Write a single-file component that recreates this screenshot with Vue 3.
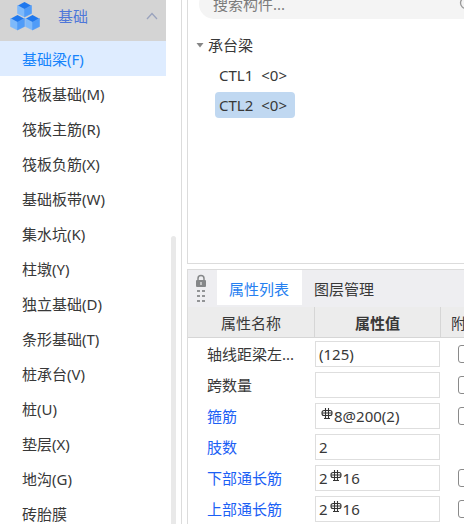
<script setup>
import { ref } from 'vue'

const members = [
  '基础梁(F)', '筏板基础(M)', '筏板主筋(R)', '筏板负筋(X)', '基础板带(W)',
  '集水坑(K)', '柱墩(Y)', '独立基础(D)', '条形基础(T)', '桩承台(V)',
  '桩(U)', '垫层(X)', '地沟(G)', '砖胎膜'
]
const activeMember = ref('基础梁(F)')

const beams = ['CTL1', 'CTL2']
const activeBeam = ref('CTL2')

const keyword = ref('')
const tabs = ['属性列表', '图层管理']
const activeTab = ref('属性列表')

const properties = ref([
  { name: '轴线距梁左...', value: '(125)', extra: false },
  { name: '跨数量', value: '', extra: false },
  { name: '箍筋', value: '8@200(2)', rebar: true, linked: true, extra: false },
  { name: '肢数', value: '2', linked: true },
  { name: '下部通长筋', count: '2', value: '16', rebar: true, linked: true, extra: false },
  { name: '上部通长筋', count: '2', value: '16', rebar: true, linked: true, extra: false }
])
</script>

<template>
  <div class="workspace">
    <aside class="sidebar">
      <nav class="menu">
        <button class="group" type="button">
          <svg class="cubes" viewBox="0 0 30 29" aria-hidden="true">
            <g v-for="p in [[7, 0], [0, 13], [15, 13]]" :key="p[0]" :transform="`translate(${p[0]} ${p[1]})`">
              <path d="M.5 3.500 7.500 7V15L.5 11.500Z" fill="#7db9fb" stroke="#7db9fb" stroke-width=".6" />
              <path d="M14.500 3.500 7.500 7V15L14.500 11.500Z" fill="#509cf8" stroke="#509cf8" stroke-width=".6" />
              <path d="M7.500 0 14 3.500 7.500 7 1 3.500Z" fill="#1f78ee" />
            </g>
          </svg>
          <span class="group-name">基础</span>
          <svg class="chevron" viewBox="0 0 12 8" aria-hidden="true">
            <path d="M1 7 6 1.500 11 7" fill="none" stroke="#9aa3bd" stroke-width="1.300" />
          </svg>
        </button>
        <button
          v-for="m in members"
          :key="m"
          type="button"
          class="member"
          :class="{ active: m === activeMember }"
          @click="activeMember = m"
        >{{ m }}</button>
      </nav>
      <div class="scroll-thumb"></div>
    </aside>

    <main class="content">
      <section class="list-panel">
        <div class="search-row">
          <label class="search">
            <input v-model="keyword" type="text" placeholder="搜索构件..." aria-label="搜索构件" />
            <svg class="magnifier" viewBox="0 0 16 16" aria-hidden="true">
              <circle cx="7" cy="7" r="5.500" fill="none" stroke="#999" stroke-width="1.300" />
              <path d="m11 11 4 4" stroke="#999" stroke-width="1.300" />
            </svg>
          </label>
        </div>
        <div class="tree">
          <button type="button" class="branch">
            <svg class="caret" viewBox="0 0 8 6" aria-hidden="true"><path d="M.5 1h7L4 5.500Z" fill="#858585" /></svg>
            <span>承台梁</span>
          </button>
          <button
            v-for="b in beams"
            :key="b"
            type="button"
            class="leaf"
            :class="{ active: b === activeBeam }"
            @click="activeBeam = b"
          ><span>{{ b }}</span><span>&lt;0&gt;</span></button>
        </div>
      </section>

      <section class="property-panel">
        <div class="tabs">
          <svg class="grip" viewBox="0 0 12 29" aria-hidden="true">
            <path d="M3 7V4.500a3 3 0 0 1 6 0V7" fill="none" stroke="#858789" stroke-width="1.500" />
            <rect x="1" y="6" width="10" height="7" rx="1" fill="#858789" />
            <path d="M6 8v3" stroke="#d8d8da" stroke-width="1.500" />
            <path d="M2 16h3v2H2zM7 16h3v2H7zM2 21h3v2H2zM7 21h3v2H7zM2 26h3v2H2zM7 26h3v2H7z" fill="#929496" />
          </svg>
          <button
            v-for="t in tabs"
            :key="t"
            type="button"
            class="tab"
            :class="{ active: t === activeTab }"
            @click="activeTab = t"
          >{{ t }}</button>
        </div>
        <table class="properties">
          <colgroup><col class="col-name" /><col class="col-value" /><col /></colgroup>
          <thead>
            <tr><th>属性名称</th><th class="strong">属性值</th><th class="extra-head">附</th></tr>
          </thead>
          <tbody>
            <tr v-for="(p, i) in properties" :key="p.name">
              <td class="name" :class="{ linked: p.linked }"><label :for="`prop-${i}`">{{ p.name }}</label></td>
              <td class="value">
                <div class="field">
                  <span v-if="p.count">{{ p.count }}</span>
                  <svg v-if="p.rebar" class="rebar" viewBox="0 0 12 12" aria-hidden="true">
                    <path d="M4.500 2.500H3A2 2 0 0 0 1 4.500V5.500A2 2 0 0 0 3 7.500H9A2 2 0 0 0 11 5.500V4.500A2 2 0 0 0 9 2.500H4.500M1 5H11M4.500 0V10.500M7.500 0V10.500M3 10.500H9" fill="none" stroke="#333" stroke-width="1.100" />
                  </svg>
                  <input :id="`prop-${i}`" v-model="p.value" type="text" />
                </div>
              </td>
              <td class="extra">
                <input v-if="p.extra !== undefined" v-model="p.extra" type="checkbox" :aria-label="p.name" />
              </td>
            </tr>
          </tbody>
        </table>
      </section>
    </main>
  </div>
</template>

<style>
body {
  margin: 0;
  background: #fff;
}
</style>

<style scoped>
.workspace {
  display: flex;
  height: 100vh;
  overflow: hidden;
  color: #383838;
  font: 15px/20px "Noto Sans", "Noto Sans CJK SC", sans-serif;
}
button,
input {
  box-sizing: border-box;
  margin: 0;
  padding: 0;
  border: 0;
  background: none;
  color: inherit;
  font: inherit;
}
button {
  text-align: left;
  cursor: pointer;
}
input:focus {
  outline: none;
}
.sidebar {
  display: flex;
  flex: none;
  gap: 5px;
  width: 181px;
  border-right: 1px solid #dcdcdc;
}
.menu {
  display: flex;
  flex: none;
  flex-direction: column;
  width: 166px;
}
.group {
  display: flex;
  flex: none;
  align-items: center;
  height: 41px;
  padding: 0 8px 9px 10px;
  background: #d4d4d4;
  color: #4e77d9;
}
.cubes {
  width: 30px;
  height: 29px;
}
.group-name {
  flex: 1;
  padding-left: 18px;
}
.chevron {
  width: 12px;
  height: 8px;
}
.member {
  flex: none;
  height: 35px;
  padding-left: 22px;
}
.member.active {
  background: #deecff;
  color: #1684fc;
}
.scroll-thumb {
  width: 5px;
  margin-top: 236px;
  border-radius: 3px 3px 0 0;
  background: #e9e9e9;
}
.content {
  display: flex;
  flex: 1;
  flex-direction: column;
  gap: 5px;
  min-width: 0;
  margin-left: 5px;
}
.list-panel {
  flex: 1;
  min-height: 0;
  border: solid #dcdcdc;
  border-width: 0 0 1px 1px;
}
.search-row {
  display: flex;
  align-items: flex-end;
  height: 19px;
  overflow: hidden;
}
.search {
  display: flex;
  flex: 1;
  align-items: center;
  height: 30px;
  margin: 0 -24px 0 11px;
  padding: 0 13px 0 14px;
  border-radius: 15px;
  background: #f4f4f4;
}
.search input {
  flex: 1;
  min-width: 0;
}
.search input::placeholder {
  color: #7c7c7c;
  opacity: 1;
}
.magnifier {
  width: 16px;
  height: 16px;
}
.tree {
  display: flex;
  flex-direction: column;
  align-items: flex-start;
  gap: 4px;
  padding-top: 13px;
}
.branch {
  display: flex;
  align-items: center;
  gap: 4px;
  height: 26px;
  padding-left: 8px;
}
.caret {
  width: 8px;
  height: 6px;
}
.leaf {
  display: flex;
  align-items: center;
  gap: 8px;
  height: 26px;
  margin-left: 27px;
  padding: 0 8px 0 4px;
  border-radius: 4px;
}
.leaf.active {
  background: #c0d8f1;
}
.property-panel {
  flex: none;
  overflow: hidden;
  border: solid #dcdcdc;
  border-width: 1px 0 0 1px;
}
.tabs {
  display: flex;
  height: 35px;
  padding-bottom: 2px;
  background: #eeeef1;
}
.grip {
  flex: none;
  width: 12px;
  height: 29px;
  margin: 4px 10px 0 7px;
}
.tab {
  padding: 2px 13px 0 12px;
}
.tab.active {
  background: #fff;
  color: #2680f0;
}
.properties {
  width: 100%;
  border-collapse: separate;
  border-spacing: 0;
  table-layout: fixed;
}
.col-name {
  width: 127px;
}
.col-value {
  width: 126px;
}
th {
  box-sizing: border-box;
  height: 31px;
  padding: 2px 0 0;
  border: solid #d6d6d6;
  border-width: 0 1px 1px 0;
  background: #ececec;
  font-weight: 400;
  text-align: center;
  white-space: nowrap;
}
.strong {
  font-weight: 600;
}
.extra-head {
  padding-left: 10px;
  border-right: 0;
  text-align: left;
}
td {
  height: 31px;
  padding: 0;
}
.name {
  padding-left: 19px;
  white-space: nowrap;
}
.linked {
  color: #1b60f5;
}
.field {
  display: flex;
  align-items: center;
  box-sizing: border-box;
  height: 26px;
  margin-right: 1px;
  padding-left: 3px;
  border: 1px solid #dedede;
}
.field input {
  flex: 1;
  min-width: 0;
}
.rebar {
  flex: none;
  width: 12px;
  height: 12px;
  margin: 0 1px 4px 2px;
}
.extra {
  overflow: hidden;
  padding-left: 17px;
}
.extra input {
  display: block;
  width: 18px;
  height: 18px;
  border: 1px solid #8a8a8a;
  border-radius: 3px;
  background: #fff;
  appearance: none;
}
.extra input:checked {
  background: #2680f0;
}
</style>
